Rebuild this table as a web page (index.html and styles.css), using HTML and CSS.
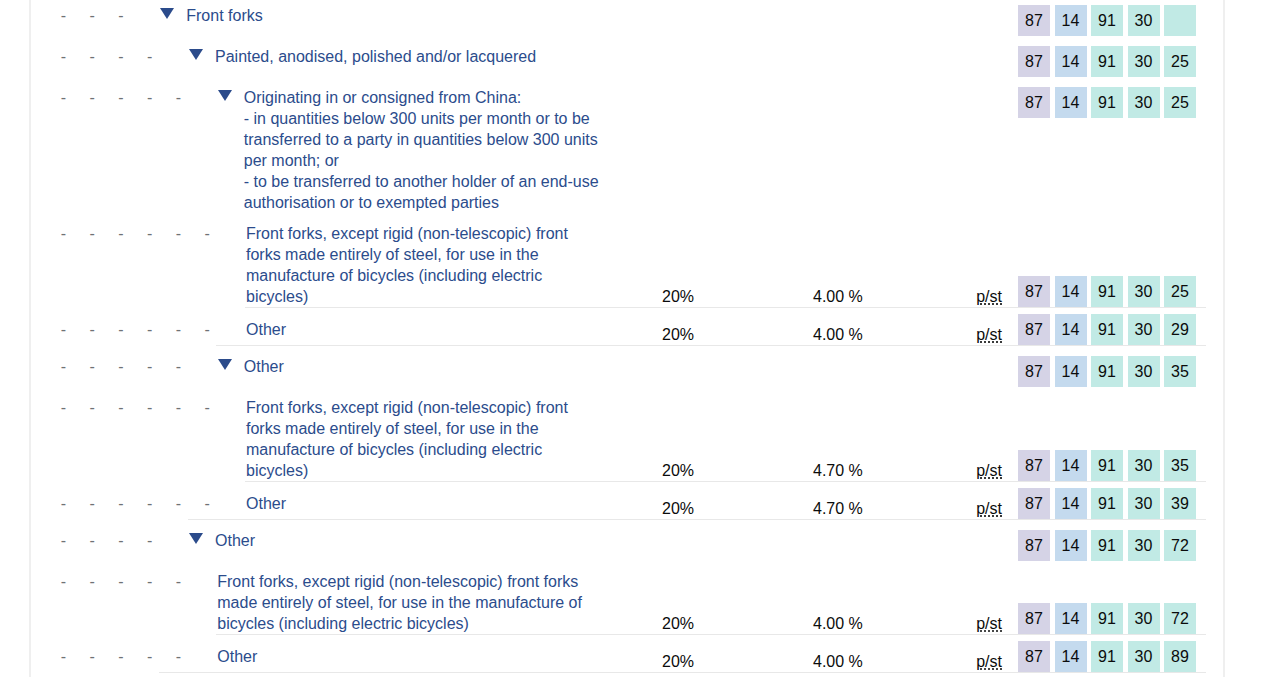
FILE: index.html
```html
<!DOCTYPE html>
<html lang="en">
<head>
<meta charset="utf-8">
<title>Commodity tree</title>
<link rel="stylesheet" href="styles.css">
</head>
<body>
<div class="panel">
  <ul class="tree">
    <li class="item">
      <div class="row row--heading">
        <div class="lead">
          <span class="dash">-</span><span class="dash">-</span><span class="dash">-</span>
          <div class="node"><svg class="toggle" viewBox="0 0 14 11"><path d="M0 0H14L7 11Z"/></svg><span class="title">Front forks</span></div>
        </div>
        <div class="codes"><span class="code code--ch">87</span><span class="code code--hd">14</span><span class="code code--sub">91</span><span class="code code--sub">30</span><span class="code code--sub"></span></div>
      </div>
    </li>
    <li class="item">
      <div class="row row--heading">
        <div class="lead">
          <span class="dash">-</span><span class="dash">-</span><span class="dash">-</span><span class="dash">-</span>
          <div class="node"><svg class="toggle" viewBox="0 0 14 11"><path d="M0 0H14L7 11Z"/></svg><span class="title">Painted, anodised, polished and/or lacquered</span></div>
        </div>
        <div class="codes"><span class="code code--ch">87</span><span class="code code--hd">14</span><span class="code code--sub">91</span><span class="code code--sub">30</span><span class="code code--sub">25</span></div>
      </div>
    </li>
    <li class="item">
      <div class="row row--heading">
        <div class="lead">
          <span class="dash">-</span><span class="dash">-</span><span class="dash">-</span><span class="dash">-</span><span class="dash">-</span>
          <div class="node"><svg class="toggle" viewBox="0 0 14 11"><path d="M0 0H14L7 11Z"/></svg><span class="title">Originating in or consigned from China:<br>- in quantities below 300 units per month or to be transferred to a party in quantities below 300 units per month; or<br>- to be transferred to another holder of an end-use authorisation or to exempted parties</span></div>
        </div>
        <div class="codes"><span class="code code--ch">87</span><span class="code code--hd">14</span><span class="code code--sub">91</span><span class="code code--sub">30</span><span class="code code--sub">25</span></div>
      </div>
    </li>
    <li class="item">
      <div class="row row--leaf">
        <div class="lead">
          <span class="dash">-</span><span class="dash">-</span><span class="dash">-</span><span class="dash">-</span><span class="dash">-</span><span class="dash">-</span>
          <div class="node node--leaf"><span class="title">Front forks, except rigid (non-telescopic) front forks made entirely of steel, for use in the manufacture of bicycles (including electric bicycles)</span></div>
        </div>
        <div class="vat">20%</div>
        <div class="duty">4.00 %</div>
        <div class="supp"><abbr title="Number of items">p/st</abbr></div>
        <div class="codes"><span class="code code--ch">87</span><span class="code code--hd">14</span><span class="code code--sub">91</span><span class="code code--sub">30</span><span class="code code--sub">25</span></div>
      </div>
      <hr class="rule rule--6">
    </li>
    <li class="item">
      <div class="row row--leaf">
        <div class="lead">
          <span class="dash">-</span><span class="dash">-</span><span class="dash">-</span><span class="dash">-</span><span class="dash">-</span><span class="dash">-</span>
          <div class="node node--leaf"><span class="title">Other</span></div>
        </div>
        <div class="vat">20%</div>
        <div class="duty">4.00 %</div>
        <div class="supp"><abbr title="Number of items">p/st</abbr></div>
        <div class="codes"><span class="code code--ch">87</span><span class="code code--hd">14</span><span class="code code--sub">91</span><span class="code code--sub">30</span><span class="code code--sub">29</span></div>
      </div>
      <hr class="rule rule--5">
    </li>
    <li class="item">
      <div class="row row--heading row--gap">
        <div class="lead">
          <span class="dash">-</span><span class="dash">-</span><span class="dash">-</span><span class="dash">-</span><span class="dash">-</span>
          <div class="node"><svg class="toggle" viewBox="0 0 14 11"><path d="M0 0H14L7 11Z"/></svg><span class="title">Other</span></div>
        </div>
        <div class="codes"><span class="code code--ch">87</span><span class="code code--hd">14</span><span class="code code--sub">91</span><span class="code code--sub">30</span><span class="code code--sub">35</span></div>
      </div>
    </li>
    <li class="item">
      <div class="row row--leaf">
        <div class="lead">
          <span class="dash">-</span><span class="dash">-</span><span class="dash">-</span><span class="dash">-</span><span class="dash">-</span><span class="dash">-</span>
          <div class="node node--leaf"><span class="title">Front forks, except rigid (non-telescopic) front forks made entirely of steel, for use in the manufacture of bicycles (including electric bicycles)</span></div>
        </div>
        <div class="vat">20%</div>
        <div class="duty">4.70 %</div>
        <div class="supp"><abbr title="Number of items">p/st</abbr></div>
        <div class="codes"><span class="code code--ch">87</span><span class="code code--hd">14</span><span class="code code--sub">91</span><span class="code code--sub">30</span><span class="code code--sub">35</span></div>
      </div>
      <hr class="rule rule--6">
    </li>
    <li class="item">
      <div class="row row--leaf">
        <div class="lead">
          <span class="dash">-</span><span class="dash">-</span><span class="dash">-</span><span class="dash">-</span><span class="dash">-</span><span class="dash">-</span>
          <div class="node node--leaf"><span class="title">Other</span></div>
        </div>
        <div class="vat">20%</div>
        <div class="duty">4.70 %</div>
        <div class="supp"><abbr title="Number of items">p/st</abbr></div>
        <div class="codes"><span class="code code--ch">87</span><span class="code code--hd">14</span><span class="code code--sub">91</span><span class="code code--sub">30</span><span class="code code--sub">39</span></div>
      </div>
      <hr class="rule rule--4">
    </li>
    <li class="item">
      <div class="row row--heading row--gap">
        <div class="lead">
          <span class="dash">-</span><span class="dash">-</span><span class="dash">-</span><span class="dash">-</span>
          <div class="node"><svg class="toggle" viewBox="0 0 14 11"><path d="M0 0H14L7 11Z"/></svg><span class="title">Other</span></div>
        </div>
        <div class="codes"><span class="code code--ch">87</span><span class="code code--hd">14</span><span class="code code--sub">91</span><span class="code code--sub">30</span><span class="code code--sub">72</span></div>
      </div>
    </li>
    <li class="item">
      <div class="row row--leaf">
        <div class="lead">
          <span class="dash">-</span><span class="dash">-</span><span class="dash">-</span><span class="dash">-</span><span class="dash">-</span>
          <div class="node node--leaf"><span class="title">Front forks, except rigid (non-telescopic) front forks made entirely of steel, for use in the manufacture of bicycles (including electric bicycles)</span></div>
        </div>
        <div class="vat">20%</div>
        <div class="duty">4.00 %</div>
        <div class="supp"><abbr title="Number of items">p/st</abbr></div>
        <div class="codes"><span class="code code--ch">87</span><span class="code code--hd">14</span><span class="code code--sub">91</span><span class="code code--sub">30</span><span class="code code--sub">72</span></div>
      </div>
      <hr class="rule rule--5">
    </li>
    <li class="item">
      <div class="row row--leaf">
        <div class="lead">
          <span class="dash">-</span><span class="dash">-</span><span class="dash">-</span><span class="dash">-</span><span class="dash">-</span>
          <div class="node node--leaf"><span class="title">Other</span></div>
        </div>
        <div class="vat">20%</div>
        <div class="duty">4.00 %</div>
        <div class="supp"><abbr title="Number of items">p/st</abbr></div>
        <div class="codes"><span class="code code--ch">87</span><span class="code code--hd">14</span><span class="code code--sub">91</span><span class="code code--sub">30</span><span class="code code--sub">89</span></div>
      </div>
      <hr class="rule rule--3">
    </li>
  </ul>
</div>
</body>
</html>
```
FILE: styles.css
```css
html, body {
  margin: 0;
  padding: 0;
  background: #ffffff;
}

body {
  font-family: "Liberation Sans", Arial, sans-serif;
  font-size: 16px;
  line-height: 21px;
  color: #0b0c0c;
}

.panel {
  margin-left: 29px;
  width: 1192px;
  min-height: 677px;
  border-left: 2px solid #efefef;
  border-right: 2px solid #efefef;
}

.tree {
  list-style: none;
  margin: 0;
  padding: 0 17px 0 18px;
}

.item {
  display: block;
}

.row {
  display: flex;
}

.row--heading {
  align-items: flex-start;
  padding: 5px 0;
}

.row--gap {
  padding-top: 10px;
}

.row--leaf {
  align-items: flex-end;
}

.lead {
  flex: 0 0 555px;
  display: flex;
  align-items: flex-start;
}

.row--leaf .lead {
  align-self: center;
  padding-top: 5px;
}

.dash {
  flex: 0 0 28.75px;
  text-align: center;
  color: #6f7275;
}

.node {
  flex: 1;
  display: flex;
  align-items: flex-start;
  padding-left: 25px;
  color: #2b4c8c;
}

.node--leaf {
  padding-left: 24.5px;
}

.toggle {
  flex: 0 0 14px;
  width: 14px;
  height: 11px;
  margin: 3px 12px 0 0;
  fill: #2b4b8b;
}

.title {
  flex: 1;
}

.vat {
  flex: 0 0 209px;
  padding-left: 58px;
  box-sizing: border-box;
}

.duty {
  flex: 0 0 150px;
}

.supp {
  flex: 0 0 39px;
  text-align: right;
}

.supp abbr {
  text-decoration: underline dotted;
  text-underline-offset: 2px;
}

.codes {
  display: flex;
  gap: 4.5px;
  margin-left: auto;
  padding-right: 10px;
}

.row--leaf .codes {
  margin-left: 16px;
  padding-top: 6px;
}

.code {
  width: 32px;
  height: 31px;
  line-height: 31px;
  text-align: center;
  color: #0b0c0c;
}

.code--ch {
  background: #d5d3e6;
}

.code--hd {
  background: #c4daee;
}

.code--sub {
  background: #c1eae5;
}

.rule {
  height: 0;
  margin: 0;
  border: 0;
  border-top: 1px solid #e8e8e8;
}

.rule--6 {
  margin-left: 196px;
}

.rule--5 {
  margin-left: 167.25px;
}

.rule--4 {
  margin-left: 138.5px;
}

.rule--3 {
  margin-left: 109.75px;
}
```
